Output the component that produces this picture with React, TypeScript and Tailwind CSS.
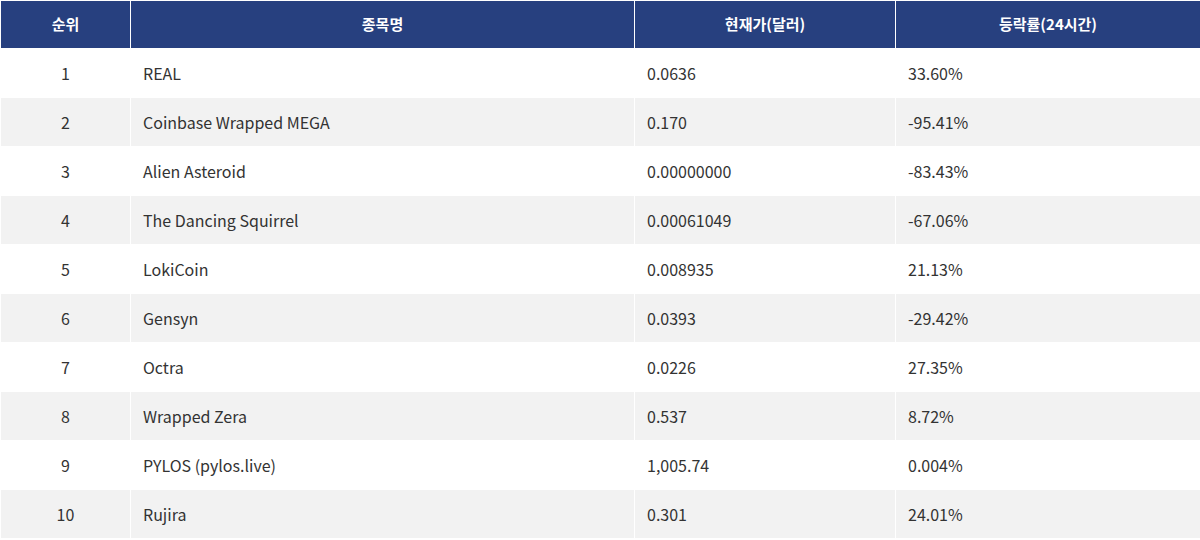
import React from "react";

const rows = [
  { rank: 1, name: "REAL", price: "0.0636", change: "33.60%" },
  { rank: 2, name: "Coinbase Wrapped MEGA", price: "0.170", change: "-95.41%" },
  { rank: 3, name: "Alien Asteroid", price: "0.00000000", change: "-83.43%" },
  { rank: 4, name: "The Dancing Squirrel", price: "0.00061049", change: "-67.06%" },
  { rank: 5, name: "LokiCoin", price: "0.008935", change: "21.13%" },
  { rank: 6, name: "Gensyn", price: "0.0393", change: "-29.42%" },
  { rank: 7, name: "Octra", price: "0.0226", change: "27.35%" },
  { rank: 8, name: "Wrapped Zera", price: "0.537", change: "8.72%" },
  { rank: 9, name: "PYLOS (pylos.live)", price: "1,005.74", change: "0.004%" },
  { rank: 10, name: "Rujira", price: "0.301", change: "24.01%" },
];

const App = () => {
  return (
    <div className="w-[1200px] h-[540px] bg-white font-['Noto_Sans_CJK_KR','Noto_Sans',sans-serif]">
      <table className="w-[1200px] border-collapse table-fixed">
        <colgroup>
          <col className="w-[130px]" />
          <col className="w-[504px]" />
          <col className="w-[261px]" />
          <col className="w-[305px]" />
        </colgroup>
        {/* Header */}
        <thead>
          <tr className="bg-[#27407f] text-white text-[15px] font-bold h-[48px]">
            <th className="border border-white font-bold">순위</th>
            <th className="border border-white font-bold">종목명</th>
            <th className="border border-white font-bold">현재가(달러)</th>
            <th className="border border-white font-bold">등락률(24시간)</th>
          </tr>
        </thead>
        <tbody>
          {rows.map((r, i) => (
            <tr
              key={r.rank}
              className={`h-[49px] text-[16px] text-[#333333] ${i % 2 === 1 ? "bg-[#f2f2f2]" : "bg-white"}`}
            >
              <td className="border border-white text-center">{r.rank}</td>
              <td className="border border-white px-3">{r.name}</td>
              <td className="border border-white px-3">{r.price}</td>
              <td className="border border-white px-3">{r.change}</td>
            </tr>
          ))}
        </tbody>
      </table>
    </div>
  );
};

export default App;
